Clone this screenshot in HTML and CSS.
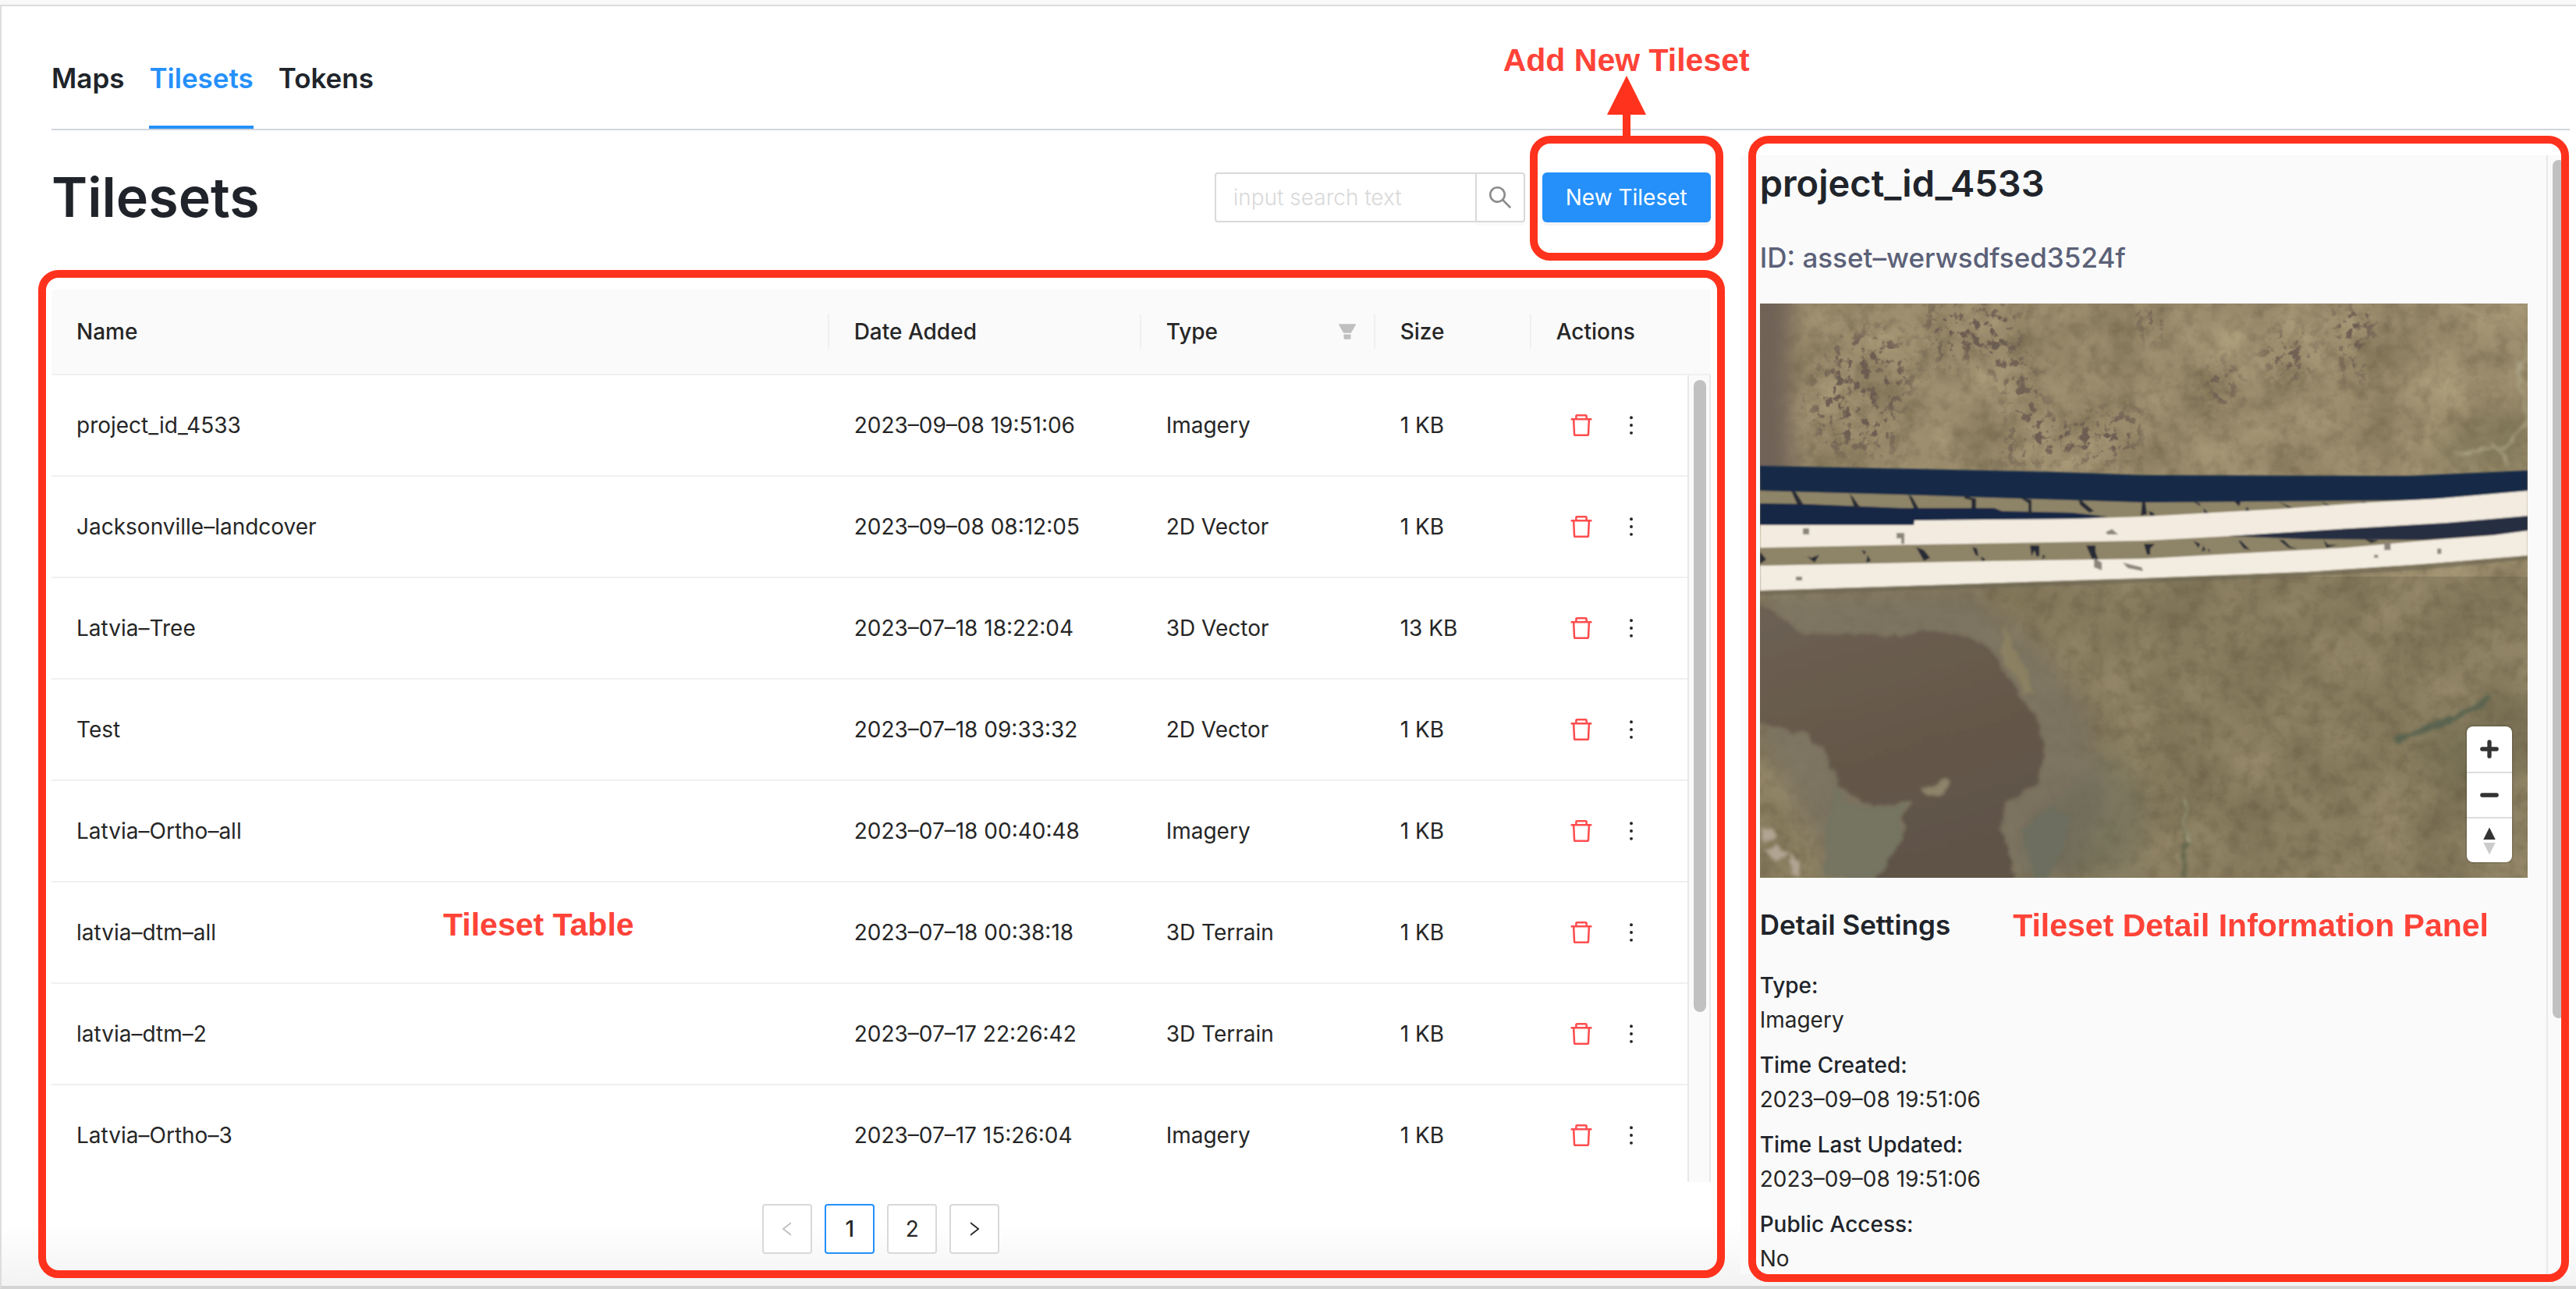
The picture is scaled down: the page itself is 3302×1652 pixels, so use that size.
FILE: index.html
```html
<!DOCTYPE html>
<html lang="en">
<head>
<meta charset="utf-8">
<meta name="viewport" content="width=device-width, initial-scale=1">
<title>Tilesets</title>
<link rel="stylesheet" href="styles.css">
</head>
<body>
<svg class="sprite" aria-hidden="true">
  <symbol id="icon-trash" viewBox="0 0 1024 1024"><path d="M360 184h-8c4.4 0 8-3.6 8-8v8h304v-8c0 4.4 3.6 8 8 8h-8v72h72v-80c0-35.3-28.7-64-64-64H352c-35.3 0-64 28.7-64 64v80h72v-72zm504 72H160c-17.7 0-32 14.3-32 32v32c0 4.4 3.6 8 8 8h60.4l24.7 523c1.6 34.1 29.8 61 63.9 61h454c34.2 0 62.3-26.8 63.9-61l24.7-523H888c4.4 0 8-3.6 8-8v-32c0-17.7-14.3-32-32-32zM731.3 840H292.7l-24.2-512h487l-24.2 512z"/></symbol>
  <symbol id="icon-more" viewBox="0 0 1024 1024"><circle cx="512" cy="232" r="56"/><circle cx="512" cy="512" r="56"/><circle cx="512" cy="792" r="56"/></symbol>
  <symbol id="icon-search" viewBox="0 0 1024 1024"><path d="M909.6 854.5L649.9 594.8C690.2 542.7 712 479 712 412c0-80.2-31.3-155.4-87.9-212.1-56.6-56.7-132-87.9-212.1-87.9s-155.5 31.3-212.1 87.9C143.2 256.5 112 331.8 112 412c0 80.1 31.3 155.5 87.9 212.1C256.5 680.8 331.8 712 412 712c67 0 130.6-21.8 182.7-62l259.7 259.6a8.2 8.2 0 0011.6 0l43.6-43.5a8.2 8.2 0 000-11.6zM570.4 570.4C528 612.7 471.8 636 412 636s-116-23.3-158.4-65.6C211.3 528 188 471.8 188 412s23.3-116.1 65.6-158.4C296 211.3 352.2 188 412 188s116.1 23.2 158.4 65.6S636 352.2 636 412s-23.3 116.1-65.6 158.4z"/></symbol>
  <symbol id="icon-filter" viewBox="0 0 1024 1024"><path d="M349 838c0 17.7 14.2 32 31.8 32h262.4c17.6 0 31.8-14.3 31.8-32V642H349v196zm531.1-684H143.9c-24.5 0-39.8 26.7-27.5 48l221.3 376h348.8l221.3-376c12.1-21.3-3.2-48-27.7-48z"/></symbol>
  <symbol id="icon-left" viewBox="0 0 1024 1024"><path d="M724 218.3V141c0-6.7-7.7-10.4-12.9-6.3L260.3 486.8a31.86 31.86 0 000 50.3l450.8 352.1c5.3 4.1 12.9.4 12.9-6.3v-77.3c0-4.9-2.3-9.6-6.1-12.6l-360-281 360-281.1c3.8-3 6.1-7.7 6.1-12.6z"/></symbol>
  <symbol id="icon-right" viewBox="0 0 1024 1024"><path d="M765.7 486.8L314.9 134.7A7.97 7.97 0 00302 141v77.3c0 4.9 2.3 9.6 6.1 12.6l360 281.1-360 281.1c-3.9 3-6.1 7.7-6.1 12.6V883c0 6.7 7.7 10.4 12.9 6.3l450.8-352.1a31.96 31.96 0 000-50.4z"/></symbol>
</svg>

<div class="page">
  <nav class="tabs">
    <a class="tab" href="#maps">Maps</a>
    <a class="tab tab-active" href="#tilesets" aria-current="page">Tilesets</a>
    <a class="tab" href="#tokens">Tokens</a>
  </nav>

  <div class="columns">
    <main class="list">
      <div class="toolbar">
        <h1 class="title">Tilesets</h1>
        <form class="search" role="search">
          <input class="search-input" type="text" placeholder="input search text" aria-label="Search tilesets">
          <button class="search-button" type="button" aria-label="Search"><svg class="icon"><use href="#icon-search"/></svg></button>
        </form>
        <div class="create">
          <button class="button-primary" type="button">New Tileset</button>
          <div class="callout callout-create"></div>
          <svg class="callout-arrow" viewBox="0 0 50 80" aria-hidden="true"><path d="M25 0L50 50H30V80H20V50H0z"/></svg>
          <span class="note note-create">Add New Tileset</span>
        </div>
      </div>

      <section class="tilesets">
        <div class="table-scroll">
          <table class="table">
            <colgroup>
              <col>
              <col class="col-date">
              <col class="col-type">
              <col class="col-size">
              <col class="col-actions">
            </colgroup>
            <thead>
              <tr>
                <th scope="col"><div class="head">Name</div></th>
                <th scope="col"><div class="head">Date Added</div></th>
                <th scope="col"><div class="head head-filter">Type <button class="filter" type="button" aria-label="Filter by type"><svg class="icon"><use href="#icon-filter"/></svg></button></div></th>
                <th scope="col"><div class="head">Size</div></th>
                <th scope="col"><div class="head head-last">Actions</div></th>
              </tr>
            </thead>
            <tbody>
              <tr><td>project_id_4533</td><td>2023–09–08 19:51:06</td><td>Imagery</td><td>1 KB</td><td><div class="actions"><button class="action action-delete" type="button" aria-label="Delete"><svg class="icon"><use href="#icon-trash"/></svg></button><button class="action" type="button" aria-label="More"><svg class="icon"><use href="#icon-more"/></svg></button></div></td></tr>
              <tr><td>Jacksonville–landcover</td><td>2023–09–08 08:12:05</td><td>2D Vector</td><td>1 KB</td><td><div class="actions"><button class="action action-delete" type="button" aria-label="Delete"><svg class="icon"><use href="#icon-trash"/></svg></button><button class="action" type="button" aria-label="More"><svg class="icon"><use href="#icon-more"/></svg></button></div></td></tr>
              <tr><td>Latvia–Tree</td><td>2023–07–18 18:22:04</td><td>3D Vector</td><td>13 KB</td><td><div class="actions"><button class="action action-delete" type="button" aria-label="Delete"><svg class="icon"><use href="#icon-trash"/></svg></button><button class="action" type="button" aria-label="More"><svg class="icon"><use href="#icon-more"/></svg></button></div></td></tr>
              <tr><td>Test</td><td>2023–07–18 09:33:32</td><td>2D Vector</td><td>1 KB</td><td><div class="actions"><button class="action action-delete" type="button" aria-label="Delete"><svg class="icon"><use href="#icon-trash"/></svg></button><button class="action" type="button" aria-label="More"><svg class="icon"><use href="#icon-more"/></svg></button></div></td></tr>
              <tr><td>Latvia–Ortho–all</td><td>2023–07–18 00:40:48</td><td>Imagery</td><td>1 KB</td><td><div class="actions"><button class="action action-delete" type="button" aria-label="Delete"><svg class="icon"><use href="#icon-trash"/></svg></button><button class="action" type="button" aria-label="More"><svg class="icon"><use href="#icon-more"/></svg></button></div></td></tr>
              <tr><td>latvia–dtm–all</td><td>2023–07–18 00:38:18</td><td>3D Terrain</td><td>1 KB</td><td><div class="actions"><button class="action action-delete" type="button" aria-label="Delete"><svg class="icon"><use href="#icon-trash"/></svg></button><button class="action" type="button" aria-label="More"><svg class="icon"><use href="#icon-more"/></svg></button></div></td></tr>
              <tr><td>latvia–dtm–2</td><td>2023–07–17 22:26:42</td><td>3D Terrain</td><td>1 KB</td><td><div class="actions"><button class="action action-delete" type="button" aria-label="Delete"><svg class="icon"><use href="#icon-trash"/></svg></button><button class="action" type="button" aria-label="More"><svg class="icon"><use href="#icon-more"/></svg></button></div></td></tr>
              <tr><td>Latvia–Ortho–3</td><td>2023–07–17 15:26:04</td><td>Imagery</td><td>1 KB</td><td><div class="actions"><button class="action action-delete" type="button" aria-label="Delete"><svg class="icon"><use href="#icon-trash"/></svg></button><button class="action" type="button" aria-label="More"><svg class="icon"><use href="#icon-more"/></svg></button></div></td></tr>
            </tbody>
          </table>
          <div class="scrollbar scrollbar-table"><div class="thumb thumb-table"></div></div>
        </div>
        <nav class="pager" aria-label="Pages">
          <button class="page-button" type="button" disabled aria-label="Previous page"><svg class="icon icon-small"><use href="#icon-left"/></svg></button>
          <button class="page-button page-current" type="button" aria-current="page">1</button>
          <button class="page-button" type="button">2</button>
          <button class="page-button" type="button" aria-label="Next page"><svg class="icon icon-small"><use href="#icon-right"/></svg></button>
        </nav>
        <div class="callout callout-table"></div>
        <span class="note note-table">Tileset Table</span>
      </section>
    </main>

    <aside class="detail">
      <div class="detail-body">
        <h2 class="detail-title">project_id_4533</h2>
        <p class="detail-id">ID: asset–werwsdfsed3524f</p>
        <div class="map">
          <svg class="map-image" viewBox="0 0 984 736" preserveAspectRatio="xMidYMid slice" role="img" aria-label="Aerial imagery of a bridge over marshland">
            <defs>
              <filter id="ground" x="0" y="0" width="100%" height="100%" color-interpolation-filters="sRGB">
                <feTurbulence type="fractalNoise" baseFrequency="0.012" numOctaves="5" seed="7"/>
                <feColorMatrix values="0.22 0 0 0 0.49  0.21 0 0 0 0.44  0.18 0 0 0 0.33  0 0 0 0 1"/>
              </filter>
              <filter id="grain" x="0" y="0" width="100%" height="100%" color-interpolation-filters="sRGB">
                <feTurbulence type="fractalNoise" baseFrequency="0.05" numOctaves="4" seed="21"/>
                <feColorMatrix values="0 0 0 0 0.25  0 0 0 0 0.21  0 0 0 0 0.14  0 1.2 0 0 -0.5"/>
              </filter>
              <filter id="speckle" x="-20%" y="-20%" width="140%" height="140%" color-interpolation-filters="sRGB">
                <feGaussianBlur in="SourceGraphic" stdDeviation="14" result="area"/>
                <feTurbulence type="fractalNoise" baseFrequency="0.085" numOctaves="3" seed="4"/>
                <feColorMatrix values="0 0 0 0 0.42  0 0 0 0 0.36  0 0 0 0 0.32  7 0 0 0 -3.7"/>
                <feComposite in2="area" operator="in"/>
              </filter>
              <filter id="rough" x="-10%" y="-10%" width="120%" height="120%">
                <feTurbulence type="fractalNoise" baseFrequency="0.04" numOctaves="3" seed="3"/>
                <feDisplacementMap in="SourceGraphic" scale="18" xChannelSelector="R" yChannelSelector="G"/>
                <feGaussianBlur stdDeviation="2"/>
              </filter>
              <filter id="soft" x="-10%" y="-10%" width="120%" height="120%"><feGaussianBlur stdDeviation="14"/></filter>
              <filter id="edge"><feGaussianBlur stdDeviation="1"/></filter>
              <linearGradient id="water" x1="0" y1="0" x2="0.3" y2="1"><stop offset="0" stop-color="#6d6054"/><stop offset=".5" stop-color="#66594b"/><stop offset="1" stop-color="#5f5247"/></linearGradient>
            </defs>
            <rect width="984" height="736" filter="url(#ground)"/>
            <path d="M0 350H984V736H0z" fill="#635c46" opacity=".3"/>
            <rect width="984" height="736" filter="url(#grain)" opacity=".4"/>
            <g filter="url(#soft)">
              <path d="M-30-30H44L36 80 46 230H-30z" fill="#6f6256"/>
              <path d="M0 370H270L360 440 420 520 440 640 390 736H100L0 560z" fill="#7a7261" opacity=".75"/>
              <path d="M870 170L984 130V215H860z" fill="#6d6749" opacity=".5"/>
              <path d="M330 680L450 570 500 640 480 736H340z" fill="#6a6858" opacity=".5"/>
              <path d="M830 560L984 500V600L900 640z" fill="#66654c" opacity=".4"/>
            </g>
            <g filter="url(#rough)">
              <path d="M-10 385L10 390 50 424 70 424 123 424 180 424 226 416 275 431 309 456 323 489 350 523 364 568 357 613 316 643 309 678 330 746H145L185 678 190 638 142 643 100 618 86 568 59 551 12 540-10 535z" fill="url(#water)"/>
              <path d="M95 615L115 640 137 646 185 640 182 680 155 736H80z" fill="#757462"/>
              <path d="M205 622L224 618 233 606 238 612 233 630 215 630z" fill="#8d846a"/>
              <path d="M314 410L330 455 345 480 352 500 340 498 322 470 312 440z" fill="#8b8162"/>
              <path d="M340 670L375 645 400 655 370 736H350z" fill="#6d6e5f"/>
              <path d="M815 557L880 530 935 505 938 509 885 538 820 563z" fill="#5a6450"/>
              <path d="M538 736L543 640 547 640 546 736z" fill="#65684e"/>
            </g>
            <g filter="url(#speckle)" fill="#000">
              <path d="M60 120L100 40 170 30 200 90 180 130 175 190 80 190z"/>
              <path d="M210 0H330V50L360 90 320 100 270 70 220 80z"/>
              <path d="M310 110L350 90 370 150 490 130 480 200H290L330 160z"/>
              <path d="M640 60L670 30 710 50 700 100 660 95z"/>
              <path d="M730 0H800L780 60 770 110 750 100z"/>
              <ellipse cx="590" cy="105" rx="22" ry="34"/>
              <ellipse cx="500" cy="22" rx="20" ry="22"/>
            </g>
            <g fill="none" stroke="#aaa184" stroke-width="3" filter="url(#rough)">
              <path d="M984 50L972 90 984 155 950 185 890 190M940 180L960 205"/>
              <path d="M880 0L925 20M545 640V690"/>
            </g>
            <g filter="url(#rough)" fill="#b0a493"><path d="M0 670l12 4 8 10-14 6zM4 700l16-6 14 10-10 12zM36 700l10 12 8 22h-12z"/></g>
            <g filter="url(#edge)">
              <path d="M0 240L984 239V300L492 330 0 336z" fill="#8e8468"/>
              <path d="M0 208L200 212 380 216 492 220 830 221 984 214V242L870 252 492 255 300 249 180 245 0 240z" fill="#172a47"/>
              <path d="M0 256L60 257 180 262 300 262 310 266 400 268 445 273 400 279 198 286H0z" fill="#172744"/>
              <g fill="#262b35">
                <path d="M40 240l6 2 10 16h-8zM115 244l4 4 10 14h-8zM190 245l5 3 8 14h-6zM262 246l5 2 10 2v12h-6v-10l-9-2zM332 248l16 4v18h-4v-14zM408 250l6 4 14 12-6 2-12-10zM490 252l4 4 2 14-8 2zM498 266l6 2 2 4h-6zM555 254l8 2 2 4zM568 262l8 8h-6zM608 254h8l-2 6zM624 260l5 9h-8zM665 254l18 8h-6zM719 254l14 6h-6zM770 254l12 2-4 4z"/>
                <path d="M60 324l6 2 10-4-6 10zM130 316l6 2-2 4zM138 322l4 8-6 2zM200 312l10 4 8 10-8 4zM272 312l6 2 2 10-4-2zM283 324l6 4-4 4zM346 310h12v14h-4l-2-8-4 8zM362 322l4 2-4 4zM418 310h12v8l6 18-6 2-6-14zM492 308h14l-6 6v8h-4zM555 304l9 4-2 5zM568 310l3 6-5 2zM574 314l3 2-2 3zM613 304h3l12 12-8-2zM665 303h6l8 8 10 4-12-2zM722 303l6 6h12l-14 4zM775 302l18 2-10 3zM0 318l8 10-8 6z"/>
              </g>
              <path d="M0 284H197L198 278 400 276 492 273 670 263 780 255 870 250 984 240V273L880 282 760 289 640 296 492 304 200 309 0 313z" fill="#f3ebdf"/>
              <path d="M600 298L760 288 880 281 984 272V292L940 297 850 303 700 302z" fill="#282d43"/>
              <path d="M0 336L150 333 300 330 492 327 600 321 750 313 850 304 940 297 984 291V323L850 334 700 344 492 352 400 355 250 360 0 368z" fill="#f3ece1"/>
              <g fill="#8c857c">
                <path d="M55 288h8v8h-8zM175 294h10v14h-4v-7h-6zM443 293l8-4 8 7h-14zM46 350h8v5h-8zM428 326l10 6v10l-10-4zM465 332l24 6 2 5-20-4zM800 307h8v9h-8zM787 322h5v4h-5zM868 314h5v7h-5z"/>
              </g>
              <path d="M0 368L250 360 492 352 700 344 850 334 984 323V328L850 341 700 350 492 358 250 366 0 374z" fill="#6c6653" opacity=".6"/>
            </g>
          </svg>
          <div class="map-controls">
            <button class="map-control" type="button" aria-label="Zoom in"><svg class="map-icon" viewBox="0 0 58 58"><path d="M29 19.500v19M19.500 29h19" fill="none" stroke="#333" stroke-width="5.500" stroke-linecap="round"/></svg></button>
            <button class="map-control" type="button" aria-label="Zoom out"><svg class="map-icon" viewBox="0 0 58 58"><path d="M19.500 29h19" fill="none" stroke="#333" stroke-width="5.500" stroke-linecap="round"/></svg></button>
            <button class="map-control" type="button" aria-label="Reset bearing to north"><svg class="map-icon" viewBox="0 0 58 58"><path d="M21 28l8-16 8 16z" fill="#333"/><path d="M21 32l8 16 8-16z" fill="#ccc"/></svg></button>
          </div>
        </div>
        <h3 class="detail-heading">Detail Settings</h3>
        <dl class="facts">
          <div class="fact"><dt>Type:</dt><dd>Imagery</dd></div>
          <div class="fact"><dt>Time Created:</dt><dd>2023–09–08 19:51:06</dd></div>
          <div class="fact"><dt>Time Last Updated:</dt><dd>2023–09–08 19:51:06</dd></div>
          <div class="fact"><dt>Public Access:</dt><dd>No</dd></div>
        </dl>
      </div>
      <div class="scrollbar scrollbar-detail"><div class="thumb thumb-detail"></div></div>
      <div class="callout callout-detail"></div>
      <span class="note note-detail">Tileset Detail Information Panel</span>
    </aside>
  </div>
</div>
</body>
</html>
```
FILE: styles.css
```css
:root {
  --blue: #2590fa;
  --ink: #262626;
  --heading: #20242a;
  --line: #d9d9d9;
  --rule: #f0f0f0;
  --panel: #fafafa;
  --callout: #ff321d;
  --note: #ff4338;
}

* {
  box-sizing: border-box;
}

body {
  margin: 0;
  padding-top: 6px;
  background: #f8f8f8;
  color: var(--ink);
  font-family: Inter, "Liberation Sans", sans-serif;
  font-size: 28px;
  line-height: 44px;
}

h1,
h2,
h3,
p,
dl,
dd {
  margin: 0;
}

button,
input {
  font: inherit;
  color: inherit;
}

button {
  margin: 0;
  padding: 0;
  border: 0;
  background: none;
  cursor: pointer;
}

.sprite {
  position: absolute;
  width: 0;
  height: 0;
}

.icon {
  display: block;
  width: 36px;
  height: 36px;
  fill: currentColor;
}

.icon-small {
  width: 24px;
  height: 24px;
}

.page {
  min-height: calc(100vh - 6px);
  padding: 0 8px 0 64px;
  border: solid #ddd;
  border-width: 2px 0 4px 2px;
  border-bottom-color: #d4d4d4;
  background: linear-gradient(to top, #f3f3f3, #fff 80px);
}

/* Tabs */

.tabs {
  display: flex;
  gap: 32px;
  border-bottom: 2px solid #d0d5dd;
}

.tab {
  padding: 68px 0 37px;
  border-bottom: 4px solid transparent;
  color: var(--heading);
  font-size: 35px;
  font-weight: 600;
  line-height: 48px;
  text-decoration: none;
}

.tab-active {
  border-bottom-color: var(--blue);
  color: var(--blue);
}

.columns {
  display: grid;
  grid-template-columns: minmax(0, 2fr) minmax(0, 1fr);
  gap: 38px;
  padding-top: 32px;
}

/* Toolbar */

.toolbar {
  display: flex;
  align-items: center;
  height: 108px;
  margin-bottom: 64px;
}

.title {
  margin-right: auto;
  color: var(--heading);
  font-size: 70px;
  font-weight: 600;
  line-height: 88px;
}

.search {
  display: flex;
  margin-right: 22px;
}

.search-input {
  width: 336px;
  height: 64px;
  padding: 0 22px;
  border: 2px solid var(--line);
  border-radius: 4px 0 0 4px;
  outline: 0;
  background: #fff;
}

.search-input::placeholder {
  color: #d9d9d9;
  font-weight: 300;
  opacity: 1;
}

.search-button {
  display: grid;
  place-items: center;
  width: 64px;
  height: 64px;
  margin-left: -2px;
  border: 2px solid var(--line);
  border-radius: 0 4px 4px 0;
  background: #fff;
  box-shadow: 0 4px 0 rgba(0, 0, 0, .02);
  color: #8c8c8c;
}

.create {
  position: relative;
}

.button-primary {
  display: block;
  height: 64px;
  padding: 0 30px;
  border-radius: 6px;
  background: var(--blue);
  box-shadow: 0 4px 0 rgba(0, 0, 0, .04);
  color: #fff;
}

/* Table */

.tilesets {
  position: relative;
}

.table-scroll {
  position: relative;
  max-height: calc(100vh - 508px);
  overflow: hidden;
}

.table {
  width: 100%;
  border-collapse: separate;
  border-spacing: 0;
  table-layout: fixed;
}

.col-date {
  width: 400px;
}

.col-type {
  width: 300px;
}

.col-size {
  width: 200px;
}

.col-actions {
  width: 230px;
}

.table th {
  height: 110px;
  padding: 0;
  border-bottom: 2px solid var(--rule);
  background: var(--panel);
  font-weight: 500;
  text-align: left;
}

.table th:first-child {
  border-top-left-radius: 4px;
}

.table th:last-child {
  border-top-right-radius: 4px;
}

.head {
  padding-left: 32px;
  border-right: 2px solid var(--rule);
}

.head-last {
  border-right: 0;
}

.head-filter {
  display: flex;
  align-items: center;
  justify-content: space-between;
  padding-right: 20px;
}

.filter {
  color: #bfbfbf;
}

.filter .icon {
  width: 28px;
  height: 28px;
}

.table td {
  height: 130px;
  padding: 0 0 0 32px;
  border-bottom: 2px solid var(--rule);
}

.actions {
  display: flex;
  gap: 28px;
  padding-left: 14px;
}

.action-delete {
  color: #ff4d4f;
}

.scrollbar {
  position: absolute;
  border: solid #e8e8e8;
  background: var(--panel);
}

.scrollbar-table {
  top: 110px;
  right: 0;
  bottom: 0;
  width: 30px;
  border-width: 0 2px;
}

.thumb {
  width: 16px;
  border-radius: 8px;
  background: #c1c1c1;
}

.thumb-table {
  height: calc(100% - 224px);
  margin: 6px 0 0 6px;
}

/* Pagination */

.pager {
  display: flex;
  justify-content: center;
  gap: 16px;
  padding-top: 28px;
}

.page-button {
  display: grid;
  place-items: center;
  width: 64px;
  height: 64px;
  border: 2px solid var(--line);
  border-radius: 4px;
  background: #fff;
}

.page-button:disabled {
  color: #bfbfbf;
}

.page-current {
  border-color: var(--blue);
  font-weight: 500;
}

/* Detail panel */

.detail {
  position: relative;
  height: calc(100vh - 218px);
  background: var(--panel);
}

.detail-body {
  height: 100%;
  padding: 0 54px 0 25px;
  overflow: hidden;
}

.detail-title {
  color: var(--heading);
  font-size: 47px;
  font-weight: 600;
  line-height: 72px;
}

.detail-id {
  margin: 35px 0;
  color: #5b6178;
  font-size: 35px;
  font-weight: 500;
  line-height: 48px;
}

.map {
  position: relative;
  height: 736px;
  overflow: hidden;
}

.map-image {
  display: block;
  width: 100%;
  height: 100%;
}

.map-controls {
  position: absolute;
  right: 20px;
  bottom: 20px;
  overflow: hidden;
  border-radius: 8px;
  background: #fff;
  box-shadow: 0 0 0 2px rgba(0, 0, 0, .1);
}

.map-control {
  display: block;
  width: 58px;
  height: 58px;
}

.map-control + .map-control {
  border-top: 2px solid #ddd;
}

.map-icon {
  display: block;
  width: 58px;
  height: 56px;
}

.detail-heading {
  margin: 36px 0 32px;
  color: var(--heading);
  font-size: 35px;
  font-weight: 600;
  line-height: 48px;
}

.fact {
  margin-bottom: 14px;
}

.fact dt {
  color: var(--heading);
  font-weight: 500;
}

.scrollbar-detail {
  top: 0;
  right: 0;
  bottom: 0;
  width: 30px;
  border-width: 0 0 0 2px;
}

.thumb-detail {
  height: calc(100% - 334px);
  margin: 6px 0 0 6px;
}

/* Callouts drawn over the page */

.callout {
  position: absolute;
  border: 10px solid var(--callout);
  border-radius: 26px;
  pointer-events: none;
}

.callout-create {
  inset: -47px -16px -49px;
}

.callout-arrow {
  position: absolute;
  top: -124px;
  left: calc(50% - 25px);
  width: 50px;
  height: 80px;
  fill: var(--callout);
}

.callout-table {
  inset: -25px -18px -31px -17px;
}

.callout-detail {
  inset: -25px 1px -10px 10px;
}

.note {
  position: absolute;
  color: var(--note);
  font-family: "Liberation Sans", Arial, sans-serif;
  font-size: 41px;
  font-weight: 700;
  line-height: 48px;
  white-space: nowrap;
}

.note-create {
  top: -168px;
  left: 50%;
  transform: translateX(-50%);
}

.note-table {
  top: 790px;
  left: 502px;
}

.note-detail {
  right: 104px;
  bottom: 423px;
}
```
